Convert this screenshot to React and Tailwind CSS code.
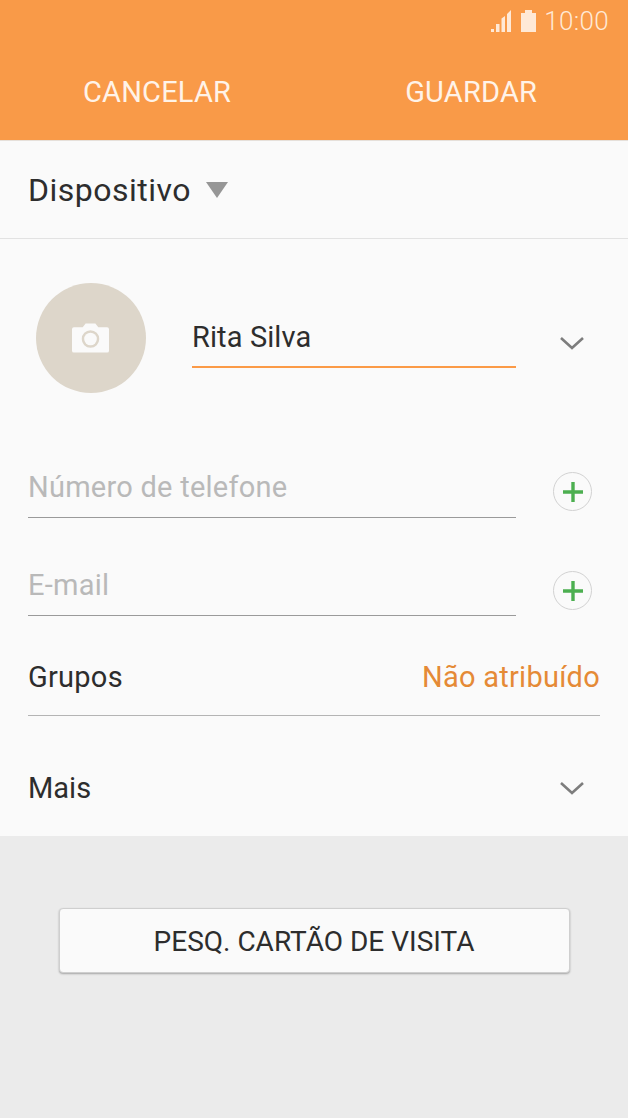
// New contact form with device picker and business-card search
const font = 'font-["Roboto",sans-serif]';

function PlusButton() {
  return (
    <div className="w-[39px] h-[39px] rounded-full border border-[#d2d2d2] flex items-center justify-center shrink-0">
      <svg width="24" height="24" viewBox="0 0 24 24">
        <path d="M12 2v20M2 12h20" stroke="#4caf50" strokeWidth="3.4" fill="none" />
      </svg>
    </div>
  );
}

function Chevron() {
  return (
    <svg width="26" height="14" viewBox="0 0 26 14">
      <path d="M2 2l11 10L24 2" stroke="#7d7d7d" strokeWidth="2.6" fill="none" />
    </svg>
  );
}

function FieldRow({ label, height, pt, plusTop }) {
  return (
    <div className={`flex pl-7 pr-[36px] ${height}`}>
      <div className={`w-[488px] border-b border-[#9a9a9a] text-[29px] leading-[34px] text-[#b9b9b9] tracking-[0.25px] ${pt}`}>
        {label}
      </div>
      <div className={`ml-auto ${plusTop}`}>
        <PlusButton />
      </div>
    </div>
  );
}

export default function App() {
  return (
    <div className={`${font} w-[628px] h-[1118px] bg-[#ebebeb] flex flex-col overflow-hidden`}>
      {/* Orange action bar with status icons */}
      <div className="h-[140px] bg-[#f99a48] flex flex-col shrink-0">
        <div className="h-[42px] flex items-center justify-end pr-[19px] gap-[8px] text-[#ffe9d6]">
          <svg width="21" height="22" viewBox="0 0 21 22" className="mr-[1px]">
            <path d="M0 22v-3h3v3zM5 22v-8h3.5v8zM10.5 22V8.5L14 6v16zM16 22V4l4-4v22z" fill="#ffe9d6" />
          </svg>
          <svg width="15" height="22" viewBox="0 0 15 22">
            <path d="M0 3h4V0h7v3h4v19H0z" fill="#ffe9d6" />
          </svg>
          <span className="text-[26px] leading-none font-light tracking-[0.3px]">10:00</span>
        </div>
        <div className="flex text-[#fff3e8] text-[29px] leading-[34px] pt-[33px] tracking-[0.2px]">
          <span className="ml-[83px]">CANCELAR</span>
          <span className="ml-[174px]">GUARDAR</span>
        </div>
      </div>

      <div className="bg-[#fafafa] h-[696px] shrink-0 flex flex-col">
        {/* Storage location */}
        <div className="h-[99px] border-t border-[#e6e0da] border-b border-b-[#e2e2e2] flex items-center pl-7 gap-[14px] shrink-0">
          <span className="text-[32px] leading-none text-[#2d2d2d] tracking-[0.5px]">Dispositivo</span>
          <svg width="24" height="16" viewBox="0 0 24 16" className="mt-[1px]">
            <path d="M1 0h22L12 16z" fill="#969696" />
          </svg>
        </div>

        {/* Photo and name */}
        <div className="flex h-[154px] shrink-0 pl-9 pt-[44px]">
          <div className="w-[110px] h-[110px] rounded-full bg-[#ddd6ca] flex items-center justify-center">
            <svg width="37" height="30" viewBox="0 0 38 30" className="mr-[1px]">
              <path
                fillRule="evenodd"
                d="M2 4h9l3-4h10l3 4h9a2 2 0 0 1 2 2v22a2 2 0 0 1-2 2H2a2 2 0 0 1-2-2V6a2 2 0 0 1 2-2zM19 7a9 9 0 1 0 0 18 9 9 0 0 0 0-18z"
                fill="#fafafa"
              />
              <circle cx="19" cy="16" r="6.5" fill="#fafafa" />
            </svg>
          </div>
          <div className="ml-[46px] w-[324px] h-[85px] border-b-2 border-[#fb9a47] mt-0 pt-[37px] text-[29px] leading-[34px] text-[#2d2d2d] tracking-[0.1px]">
            Rita Silva
          </div>
          <div className="ml-[43px] mt-[53px]">
            <Chevron />
          </div>
        </div>

        <FieldRow label="Número de telefone" height="h-[125px]" pt="pt-[77px]" plusTop="mt-[79px]" />
        <FieldRow label="E-mail" height="h-[98px]" pt="pt-[50px]" plusTop="mt-[53px]" />

        {/* Groups */}
        <div className="mx-7 h-[100px] border-b border-[#b4b4b4] flex items-end justify-between pb-[21px] text-[29px] leading-[34px] shrink-0 tracking-[0.25px]">
          <span className="text-[#2d2d2d]">Grupos</span>
          <span className="text-[#e58a36]">Não atribuído</span>
        </div>

        {/* More fields */}
        <div className="flex items-center justify-between pl-7 pr-[43px] pt-[55px] text-[29px] leading-[34px] text-[#2d2d2d]">
          <span>Mais</span>
          <Chevron />
        </div>
      </div>

      <div className="flex justify-center pt-[72px]">
        <button className="w-[511px] h-[65px] pt-[3px] bg-[#fafafa] rounded-[4px] border border-[#cfcfcf] shadow-[0_1px_2px_rgba(0,0,0,0.3)] text-[28px] text-[#2d2d2d]">
          PESQ. CARTÃO DE VISITA
        </button>
      </div>
    </div>
  );
}
